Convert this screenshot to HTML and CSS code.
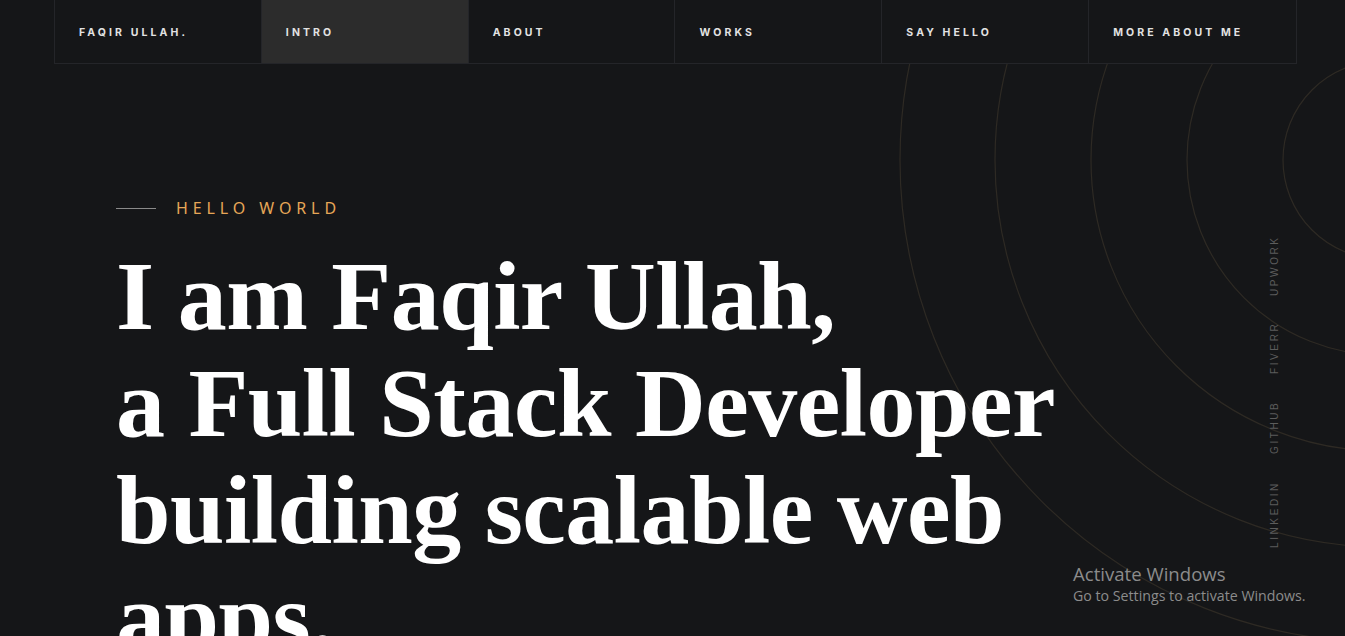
FILE: index.html
```html
<!DOCTYPE html>
<html lang="en">
<head>
<meta charset="utf-8">
<title>Faqir Ullah</title>
<link rel="stylesheet" href="styles.css">
</head>
<body>
<svg class="rings" width="1345" height="636" viewBox="0 0 1345 636" aria-hidden="true">
  <g fill="none" stroke="#2e2a24" stroke-width="1.2">
    <circle cx="1382" cy="160" r="99"/>
    <circle cx="1382" cy="160" r="195"/>
    <circle cx="1382" cy="160" r="291"/>
    <circle cx="1382" cy="160" r="387"/>
    <circle cx="1382" cy="160" r="482"/>
  </g>
</svg>
<header class="nav">
  <a class="nav-item">FAQIR ULLAH.</a>
  <a class="nav-item active">INTRO</a>
  <a class="nav-item">ABOUT</a>
  <a class="nav-item">WORKS</a>
  <a class="nav-item">SAY HELLO</a>
  <a class="nav-item">MORE ABOUT ME</a>
</header>
<main class="hero">
  <div class="eyebrow"><span class="eyebrow-line"></span><span class="eyebrow-text">HELLO WORLD</span></div>
  <h1 class="title">I am Faqir Ullah,<br>a Full Stack Developer<br>building scalable web<br>apps.</h1>
</main>
<ul class="social">
  <li>LINKEDIN</li>
  <li>GITHUB</li>
  <li>FIVERR</li>
  <li>UPWORK</li>
</ul>
<div class="activate">
  <div class="activate-title">Activate Windows</div>
  <div class="activate-sub">Go to Settings to activate Windows.</div>
</div>
</body>
</html>
```
FILE: styles.css
```css
html, body {
  margin: 0;
  padding: 0;
}
body {
  background: #151618;
  width: 1345px;
  height: 636px;
  overflow: hidden;
  position: relative;
  font-family: "Liberation Sans", Arial, sans-serif;
}
.rings {
  position: absolute;
  left: 0;
  top: 0;
  pointer-events: none;
}
.nav {
  position: relative;
  display: grid;
  grid-template-columns: repeat(6, 1fr);
  width: 1243px;
  height: 64px;
  margin-left: 54px;
  box-sizing: border-box;
  border: 1px solid #242529;
  border-top: none;
  background: #151618;
}
.nav-item {
  display: flex;
  align-items: center;
  padding-left: 24px;
  padding-top: 1px;
  font-family: "Inter", "Liberation Sans", sans-serif;
  font-weight: 700;
  font-size: 10.5px;
  letter-spacing: 3.1px;
  color: #e2e2e2;
  border-right: 1px solid #242529;
}
.nav-item:last-child {
  border-right: none;
}
.nav-item.active {
  background: #2c2c2c;
}
.hero {
  position: relative;
  padding: 134px 0 0 116px;
}
.eyebrow {
  display: flex;
  align-items: center;
  gap: 20px;
  height: 20px;
}
.eyebrow-line {
  width: 40px;
  height: 1px;
  background: #8a8a8a;
}
.eyebrow-text {
  font-family: "Noto Sans", "Open Sans", sans-serif;
  font-size: 16px;
  letter-spacing: 4.9px;
  color: #e6a657;
}
.title {
  margin: 25px 0 0;
  font-family: "Liberation Serif", "Times New Roman", serif;
  font-weight: 700;
  font-size: 98px;
  line-height: 107px;
  color: #ffffff;
  letter-spacing: -0.5px;
  white-space: nowrap;
}
.social {
  position: absolute;
  left: 1269px;
  top: 235px;
  height: 313px;
  margin: 0;
  padding: 0;
  list-style: none;
  display: flex;
  justify-content: space-between;
  writing-mode: vertical-rl;
  transform: rotate(180deg);
  font-family: "Liberation Sans", Arial, sans-serif;
  font-size: 10px;
  letter-spacing: 2.6px;
  color: #5c5c5c;
}
.activate {
  position: absolute;
  left: 1073px;
  top: 563px;
  font-family: "Open Sans", "Noto Sans", sans-serif;
  color: #8c8c8c;
}
.activate-title {
  font-size: 18.6px;
  line-height: 22px;
}
.activate-sub {
  font-size: 14.2px;
  line-height: 22px;
}
```
